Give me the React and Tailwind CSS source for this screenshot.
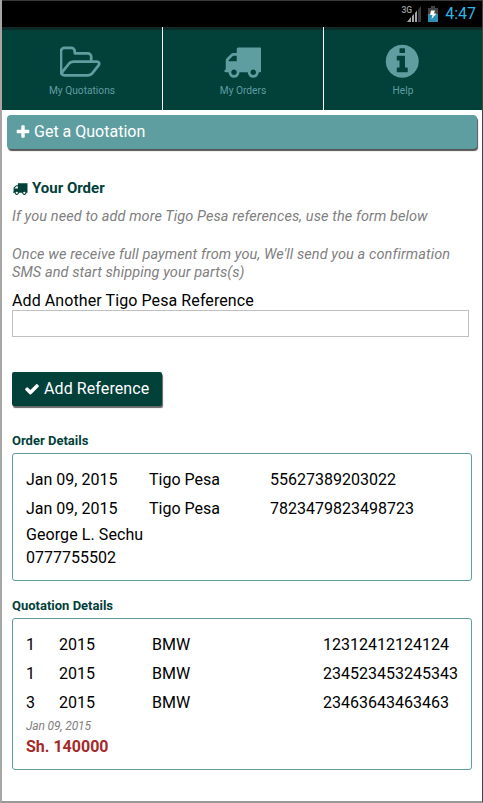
const paths = {
  truck:
    "M640 1408q0-52-38-90t-90-38-90 38-38 90 38 90 90 38 90-38 38-90zm-384-512h384v-256h-158q-13 0-22 9l-195 195q-9 9-9 22v30zm1280 512q0-52-38-90t-90-38-90 38-38 90 38 90 90 38 90-38 38-90zm256-1088v1024q0 15-4 26.5t-13.5 18.5-16.5 11.5-23.5 6-22.5 2-25.5 0-22.5-.5q0 106-75 181t-181 75-181-75-75-181h-384q0 106-75 181t-181 75-181-75-75-181h-64q-3 0-22.5.5t-25.5 0-22.5-2-23.5-6-16.5-11.5-13.5-18.5-4-26.5q0-26 19-45t45-19v-320q0-8-.5-35t0-38 2.5-34.5 6.5-37 14-30.5 22.5-30l198-198q19-19 50.5-32t58.5-13h160v-192q0-26 19-45t45-19h1024q26 0 45 19t19 45z",
  folder:
    "M1781 1013q0-35-53-35h-1088q-40 0-85.5 21.5t-71.5 52.5l-294 363q-18 24-18 40 0 35 53 35h1088q40 0 86-22t71-53l294-363q18-22 18-39zm-1141-163h768v-160q0-40-28-68t-68-28h-576q-40 0-68-28t-28-68v-64q0-40-28-68t-68-28h-320q-40 0-68 28t-28 68v853l256-315q44-53 116-87.5t140-34.5zm1269 163q0 62-46 120l-295 363q-43 53-116 87.5t-140 34.5h-1088q-92 0-158-66t-66-158v-960q0-92 66-158t158-66h320q92 0 158 66t66 158v32h544q92 0 158 66t66 158v160h192q54 0 99 24.5t67 70.5q15 32 15 68z",
  plus: "M1600 736v192q0 40-28 68t-68 28h-416v416q0 40-28 68t-68 28h-192q-40 0-68-28t-28-68v-416h-416q-40 0-68-28t-28-68v-192q0-40 28-68t68-28h416v-416q0-40 28-68t68-28h192q40 0 68 28t28 68v416h416q40 0 68 28t28 68z",
  check:
    "M1671 566q0 40-28 68l-724 724-136 136q-28 28-68 28t-68-28l-136-136-362-362q-28-28-28-68t28-68l136-136q28-28 68-28t68 28l294 295 656-657q28-28 68-28t68 28l136 136q28 28 28 68z",
  info: "M1152 1376v-160q0-14-9-23t-23-9h-96v-512q0-14-9-23t-23-9h-320q-14 0-23 9t-9 23v160q0 14 9 23t23 9h96v320h-96q-14 0-23 9t-9 23v160q0 14 9 23t23 9h448q14 0 23-9t9-23zm-128-896v-160q0-14-9-23t-23-9h-192q-14 0-23 9t-9 23v160q0 14 9 23t23 9h192q14 0 23-9t9-23zm640 416q0 209-103 385.5t-279.5 279.5-385.5 103-385.5-103-279.5-279.5-103-385.5 103-385.5 279.5-279.5 385.5-103 385.5 103 279.5 279.5 103 385.5z",
};

const payments = [
  { date: "Jan 09, 2015", method: "Tigo Pesa", reference: "55627389203022" },
  { date: "Jan 09, 2015", method: "Tigo Pesa", reference: "7823479823498723" },
];

const parts = [
  { qty: 1, year: 2015, make: "BMW", number: "12312412124124" },
  { qty: 1, year: 2015, make: "BMW", number: "234523453245343" },
  { qty: 3, year: 2015, make: "BMW", number: "23463643463463" },
];

const Icon = ({ name, className, box = "0 0 1792 1792" }) => (
  <svg viewBox={box} fill="currentColor" className={className}>
    <path d={paths[name]} />
  </svg>
);

const StatusBar = () => (
  <div className="flex h-[27px] items-center justify-end border-t border-[#3a3a3a] bg-black pr-[6px]">
    <div className="flex">
      <span className="-mr-[5px] text-[8.5px] leading-[8px] font-medium text-[#a0a0a0]">
        3G
      </span>
      <svg viewBox="0 0 14 16" className="h-[16px] w-[14px]">
        <path d="M14 0v16h-3V3.500z" fill="#3c3c3c" />
        <path d="M10 4.500V16H8V7zM7 8v8H5v-6zM4 11v5H0z" fill="#a5a5a5" />
      </svg>
    </div>
    <svg viewBox="0 0 10 16" className="ml-[7px] h-[16px] w-[10px]">
      <path d="M3 0h4v2h3v6H0V2h3z" fill="#444" />
      <path d="M0 8h10v8H0z" fill="#2f8fb3" />
      <path d="M3 4.500h4l-1 3h2.500L3.500 13l1-4H2z" fill="#fff" />
    </svg>
    <span className="ml-[7px] text-[16px] leading-[20px] text-[#33b5e5]">
      4:47
    </span>
  </div>
);

const Tab = ({ icon, box, iconClass, label }) => (
  <div className="flex flex-col items-center border-t-[3px] border-[#0a2b28] bg-[#02403a] pt-[12px] text-[#5f9ea0]">
    <Icon name={icon} box={box} className={iconClass} />
    <span className="mt-[3px] text-[10.2px] leading-[14px]">{label}</span>
  </div>
);

const App = () => {
  return (
    <div className="flex h-[803px] w-[483px] flex-col border-r border-b-2 border-l-2 border-r-[#444] border-b-[#999] border-l-[#aaa5a5] bg-white font-[Roboto,sans-serif] text-[16px] text-black">
      <StatusBar />

      <nav className="grid h-[83px] grid-cols-[160px_160px_1fr] gap-px">
        <Tab
          icon="folder"
          box="20 0 1920 1792"
          iconClass="mr-[2px] h-[38.5px] w-[41.3px]"
          label="My Quotations"
        />
        <Tab
          icon="truck"
          iconClass="mr-[2px] h-[38.5px] w-[38.5px]"
          label="My Orders"
        />
        <Tab
          icon="info"
          iconClass="mr-[2px] h-[38.5px] w-[38.5px]"
          label="Help"
        />
      </nav>

      <button className="mt-[5px] mr-[5px] ml-[5px] flex h-[34px] items-center rounded-[4px] bg-[#5f9ea0] pl-[8px] text-white shadow-[1px_2px_1px_#555]">
        <Icon name="plus" className="h-[16px] w-[16px]" />
        <span className="ml-[3px]">Get a Quotation</span>
      </button>

      <main className="px-[10px] pt-[30px]">
        <h1 className="flex h-[18px] items-center text-[15px] font-bold text-[#02403a]">
          <Icon name="truck" className="mr-[4px] h-[15px] w-[16px]" />
          Your Order
        </h1>
        <p className="mt-[11px] text-[14.5px] leading-[18px] tracking-[0.09px] text-[#808080] italic">
          If you need to add more Tigo Pesa references, use the form below
        </p>
        <p className="mt-[20px] text-[14.5px] leading-[18px] tracking-[0.09px] text-[#808080] italic">
          Once we receive full payment from you, We'll send you a confirmation
          SMS and start shipping your parts(s)
        </p>

        <label className="mt-[9px] block leading-[20px] tracking-[0.09px]">
          Add Another Tigo Pesa Reference
        </label>
        <input className="-mt-px block h-[27px] w-[457px] border border-[#c0c0c0]" />

        <button className="mt-[35px] flex h-[34px] w-[150px] items-center rounded-[2px] bg-[#02403a] pl-[12px] text-white shadow-[1px_2px_1px_#666]">
          <Icon name="check" className="h-[16px] w-[16px]" />
          <span className="ml-[4px] tracking-[0.09px]">Add Reference</span>
        </button>

        <h2 className="mt-[27px] text-[13px] leading-[16px] font-bold text-[#02403a]">
          Order Details
        </h2>
        <section className="mt-[4px] h-[128px] w-[460px] rounded-[3px] border border-[#5f9ea0] px-[13px] pt-[11px]">
          {payments.map((p) => (
            <div
              key={p.reference}
              className="grid h-[29px] grid-cols-[123px_121px_1fr] items-center"
            >
              <span>{p.date}</span>
              <span>{p.method}</span>
              <span>{p.reference}</span>
            </div>
          ))}
          <p className="leading-[23px] tracking-[0.08px]">George L. Sechu</p>
          <p className="leading-[23px]">0777755502</p>
        </section>

        <h2 className="mt-[17px] text-[13px] leading-[16px] font-bold text-[#02403a]">
          Quotation Details
        </h2>
        <section className="mt-[4px] h-[152px] w-[460px] rounded-[3px] border border-[#5f9ea0] px-[13px] pt-[11px]">
          {parts.map((p) => (
            <div
              key={p.number}
              className="grid h-[29px] grid-cols-[33px_93px_171px_1fr] items-center"
            >
              <span>{p.qty}</span>
              <span>{p.year}</span>
              <span>{p.make}</span>
              <span>{p.number}</span>
            </div>
          ))}
          <p className="text-[12px] leading-[18px] tracking-[-0.15px] text-[#808080] italic">
            Jan 09, 2015
          </p>
          <p className="leading-[23px] font-bold text-[#a52a2a]">Sh. 140000</p>
        </section>
      </main>
    </div>
  );
};

export default App;
